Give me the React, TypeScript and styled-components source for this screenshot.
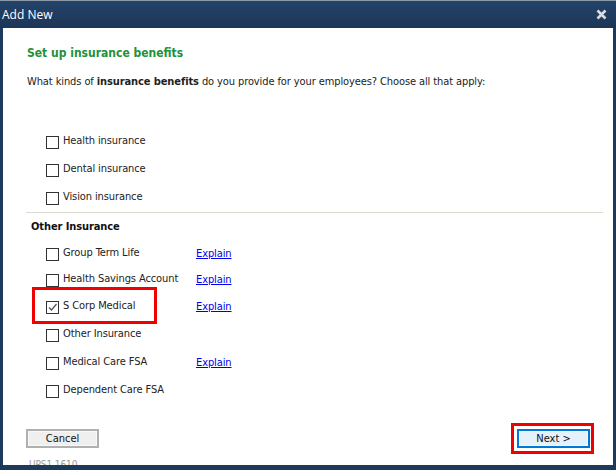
import React from "react";
import styled, { createGlobalStyle } from "styled-components";

const Global = createGlobalStyle`
  html, body { margin: 0; padding: 0; }
  body { width: 616px; height: 470px; overflow: hidden; background: #1f3b5b; }
`;

const FONT = `"DejaVu Sans Condensed", "DejaVu Sans", Verdana, sans-serif`;

const Window = styled.div`
  width: 616px;
  height: 470px;
  box-sizing: border-box;
  display: flex;
  flex-direction: column;
  background: #1e3a5b;
  border-top: 1px solid #8d99a6;
`;

const TitleBar = styled.div`
  height: 27px;
  flex-shrink: 0;
  display: flex;
  align-items: center;
  justify-content: space-between;
  padding: 0 9px 0 2px;
  background: linear-gradient(#24436a, #1c3656);
  color: #ffffff;
  font-family: "Open Sans", "Noto Sans", sans-serif;
  font-size: 12px;
`;

const Close = styled.span`
  display: flex;
  width: 11px;
  height: 11px;
`;

const Body = styled.div`
  flex: 1;
  margin: 0 3px 5px 3px;
  background: #ffffff;
  overflow: hidden;
  display: flex;
  flex-direction: column;
  font-family: ${FONT};
  font-size: 11px;
  letter-spacing: -0.1px;
  color: #222;
  & > * { flex-shrink: 0; }
`;

const Heading = styled.div`
  margin: 17px 0 0 24px;
  line-height: 16px;
  font-size: 12px;
  font-weight: bold;
  color: #23913a;
  letter-spacing: 0;
`;

const Intro = styled.div`
  margin: 14px 0 0 24px;
  line-height: 14px;
  b { font-weight: bold; }
`;

const List = styled.div<{ $top: number }>`
  display: flex;
  flex-direction: column;
  margin-top: ${(p) => p.$top}px;
`;

const Row = styled.div<{ $h: number }>`
  position: relative;
  height: ${(p) => p.$h}px;
  flex-shrink: 0;
  display: grid;
  grid-template-columns: 13px 129px auto;
  column-gap: 4px;
  align-items: center;
  padding-left: 43px;
`;

const Box = styled.span`
  width: 11px;
  height: 11px;
  border: 1px solid #333;
  background: #fff;
  display: flex;
  align-items: center;
  justify-content: center;
`;

const Label = styled.span`
  line-height: 14px;
  color: #222;
  white-space: nowrap;
  margin-top: -2px;
`;

const Explain = styled.a`
  color: #0000ee;
  text-decoration: underline;
  line-height: 14px;
  cursor: pointer;
`;

const Separator = styled.div`
  height: 1px;
  margin: 0 10px 0 23px;
  background: #dedad0;
`;

const Section = styled.div`
  margin: 7px 0 0 28px;
  line-height: 14px;
  font-weight: bold;
  color: #111;
`;

const Highlight = styled.div`
  position: absolute;
  left: 29px;
  top: -6px;
  width: 125px;
  height: 37px;
  box-sizing: border-box;
  border: 3px solid #f00000;
  pointer-events: none;
`;

const Footer = styled.div`
  margin-top: 24px;
  padding: 0 23px;
  display: flex;
  justify-content: space-between;
  align-items: center;
`;

const Button = styled.button<{ $primary?: boolean }>`
  position: relative;
  width: 73px;
  height: 19px;
  box-sizing: border-box;
  padding: 0;
  font-family: ${FONT};
  font-size: 11px;
  color: #111;
  background: ${(p) => (p.$primary ? "#e5f1fb" : "#efefef")};
  border: 2px solid ${(p) => (p.$primary ? "#0078d7" : "#b0b0b0")};
  box-shadow: inset 0 0 0 1px ${(p) => (p.$primary ? "#f5f9fd" : "#f8f8f8")};
`;

const ButtonHighlight = styled.div`
  position: absolute;
  left: -8px;
  top: -8px;
  right: -6px;
  bottom: -8px;
  border: 3px solid #f00000;
  pointer-events: none;
`;

const Version = styled.div`
  margin: 11px 0 0 26px;
  font-size: 10px;
  line-height: 12px;
  color: #9a9a9a;
`;

const Check = () => (
  <svg width="11" height="11" viewBox="0 0 11 11">
    <path d="M2 5.5 L4.5 8 L9.5 2" fill="none" stroke="#555" strokeWidth="1.3" />
  </svg>
);

type Item = { label: string; explain?: boolean; checked?: boolean; h: number };

const top: Item[] = [
  { label: "Health insurance", h: 28 },
  { label: "Dental insurance", h: 28 },
  { label: "Vision insurance", h: 28 },
];

const other: Item[] = [
  { label: "Group Term Life", explain: true, h: 26 },
  { label: "Health Savings Account", explain: true, h: 26 },
  { label: "S Corp Medical", explain: true, checked: true, h: 28 },
  { label: "Other Insurance", h: 28 },
  { label: "Medical Care FSA", explain: true, h: 28 },
  { label: "Dependent Care FSA", h: 28 },
];

const renderRow = (it: Item) => (
  <Row key={it.label} $h={it.h}>
    {it.checked && <Highlight />}
    <Box>{it.checked && <Check />}</Box>
    <Label>{it.label}</Label>
    {it.explain ? <Explain>Explain</Explain> : <span />}
  </Row>
);

export default function App() {
  return (
    <>
      <Global />
      <Window>
        <TitleBar>
          <span>Add New</span>
          <Close>
            <svg width="11" height="11" viewBox="0 0 11 11">
              <path d="M1.5 1.5 L9.5 9.5 M9.5 1.5 L1.5 9.5" stroke="#d8dde2" strokeWidth="2.6" />
            </svg>
          </Close>
        </TitleBar>
        <Body>
          <Heading>Set up insurance benefits</Heading>
          <Intro>
            What kinds of <b>insurance benefits</b> do you provide for your employees? Choose all that apply:
          </Intro>
          <List $top={39}>{top.map(renderRow)}</List>
          <Separator />
          <Section>Other Insurance</Section>
          <List $top={7}>{other.map(renderRow)}</List>
          <Footer>
            <Button>Cancel</Button>
            <Button $primary>
              Next &gt;
              <ButtonHighlight />
            </Button>
          </Footer>
          <Version>UPS1 1610</Version>
        </Body>
      </Window>
    </>
  );
}
